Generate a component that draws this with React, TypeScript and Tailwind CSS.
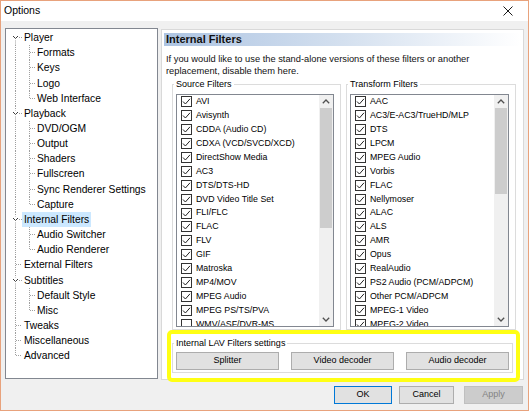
import React from "react";

type TreeNode = {
  label: string;
  level: 0 | 1;
  expanded?: boolean;
  first?: boolean;
  last?: boolean;
  selected?: boolean;
};

const tree: TreeNode[] = [
  { label: "Player", level: 0, expanded: true, first: true },
  { label: "Formats", level: 1 },
  { label: "Keys", level: 1 },
  { label: "Logo", level: 1 },
  { label: "Web Interface", level: 1, last: true },
  { label: "Playback", level: 0, expanded: true },
  { label: "DVD/OGM", level: 1 },
  { label: "Output", level: 1 },
  { label: "Shaders", level: 1 },
  { label: "Fullscreen", level: 1 },
  { label: "Sync Renderer Settings", level: 1 },
  { label: "Capture", level: 1, last: true },
  { label: "Internal Filters", level: 0, expanded: true, selected: true },
  { label: "Audio Switcher", level: 1 },
  { label: "Audio Renderer", level: 1, last: true },
  { label: "External Filters", level: 0 },
  { label: "Subtitles", level: 0, expanded: true },
  { label: "Default Style", level: 1 },
  { label: "Misc", level: 1, last: true },
  { label: "Tweaks", level: 0 },
  { label: "Miscellaneous", level: 0 },
  { label: "Advanced", level: 0, last: true },
];

const sourceFilters: [string, boolean][] = [
  ["AVI", true],
  ["Avisynth", true],
  ["CDDA (Audio CD)", true],
  ["CDXA (VCD/SVCD/XCD)", true],
  ["DirectShow Media", true],
  ["AC3", true],
  ["DTS/DTS-HD", true],
  ["DVD Video Title Set", true],
  ["FLI/FLC", true],
  ["FLAC", true],
  ["FLV", true],
  ["GIF", true],
  ["Matroska", true],
  ["MP4/MOV", true],
  ["MPEG Audio", true],
  ["MPEG PS/TS/PVA", true],
  ["WMV/ASF/DVR-MS", false],
  ["Ogg", true],
  ["RealMedia", true],
];

const transformFilters: [string, boolean][] = [
  ["AAC", true],
  ["AC3/E-AC3/TrueHD/MLP", true],
  ["DTS", true],
  ["LPCM", true],
  ["MPEG Audio", true],
  ["Vorbis", true],
  ["FLAC", true],
  ["Nellymoser", true],
  ["ALAC", true],
  ["ALS", true],
  ["AMR", true],
  ["Opus", true],
  ["RealAudio", true],
  ["PS2 Audio (PCM/ADPCM)", true],
  ["Other PCM/ADPCM", true],
  ["MPEG-1 Video", true],
  ["MPEG-2 Video", true],
  ["MPEG-4 Video", true],
];

const dotted = { stroke: "#a0a0a0", strokeWidth: 1, strokeDasharray: "1 1" };

function Gutter({ node }: { node: TreeNode }) {
  const h = 15;
  const c = 7.5;
  const w = node.level === 0 ? 16 : 29;
  return (
    <svg width={w} height={h} viewBox={`0 0 ${w} ${h}`} className="shrink-0">
      {node.level === 0 && node.expanded && (
        <>
          {!node.first && <line x1={9.5} y1={0} x2={9.5} y2={c - 3} {...dotted} />}
          {!node.last && <line x1={9.5} y1={c + 3} x2={9.5} y2={h} {...dotted} />}
          <polyline
            points={`7,${c - 1.5} 9.5,${c + 1} 12,${c - 1.5}`}
            fill="none"
            stroke="#3c3c3c"
            strokeWidth={1}
          />
          <line x1={13} y1={c} x2={16} y2={c} {...dotted} />
        </>
      )}
      {node.level === 0 && !node.expanded && (
        <>
          <line x1={9.5} y1={0} x2={9.5} y2={node.last ? c : h} {...dotted} />
          <line x1={10} y1={c} x2={16} y2={c} {...dotted} />
        </>
      )}
      {node.level === 1 && (
        <>
          <line x1={9.5} y1={0} x2={9.5} y2={h} {...dotted} />
          <line x1={23.5} y1={0} x2={23.5} y2={node.last ? c : h} {...dotted} />
          <line x1={24} y1={c} x2={29} y2={c} {...dotted} />
        </>
      )}
    </svg>
  );
}

function Tree() {
  return (
    <div className="w-[153px] h-[351px] border border-[#828790] bg-white pt-[1px] text-[10.3px] text-black">
      {tree.map((n) => (
        <div key={n.label} className="flex h-[15.16px] items-center">
          <Gutter node={n} />
          <span
            className={
              n.selected
                ? "h-[15px] px-[2px] leading-[15px] whitespace-nowrap bg-[#cce8ff]"
                : "h-[15px] px-[2px] leading-[15px] whitespace-nowrap"
            }
          >
            {n.label}
          </span>
        </div>
      ))}
    </div>
  );
}

function Check({ on }: { on: boolean }) {
  return (
    <span className="flex h-[11px] w-[11px] shrink-0 items-center justify-center border border-[#333333] bg-white">
      {on && (
        <svg width="9" height="9" viewBox="0 0 9 9">
          <polyline points="1,4.5 3.4,7 8,1.8" fill="none" stroke="#222222" strokeWidth={1} />
        </svg>
      )}
    </span>
  );
}

function Arrow({ up }: { up?: boolean }) {
  return (
    <svg width="8" height="5" viewBox="0 0 8 5">
      <polyline
        points={up ? "0.8,4.2 4,1 7.2,4.2" : "0.8,0.8 4,4 7.2,0.8"}
        fill="none"
        stroke="#505050"
        strokeWidth={1.3}
      />
    </svg>
  );
}

function FilterList({ items, thumb }: { items: [string, boolean][]; thumb: number }) {
  return (
    <div className="flex h-[233px] w-full border border-[#828790] bg-white">
      <div className="flex-1 overflow-hidden">
        {items.map(([label, on]) => (
          <div key={label} className="flex h-[13.9px] items-center gap-[4px] pl-[4px] text-[8.8px] whitespace-nowrap">
            <Check on={on} />
            <span>{label}</span>
          </div>
        ))}
      </div>
      <div className="flex w-[14px] flex-col bg-[#f0f0f0]">
        <div className="flex h-[13px] items-center justify-center">
          <Arrow up />
        </div>
        <div className="flex-1 px-[1px]">
          <div className="w-full bg-[#cdcdcd]" style={{ height: thumb }} />
        </div>
        <div className="flex h-[14px] items-center justify-center">
          <Arrow />
        </div>
      </div>
    </div>
  );
}

function Group({
  title,
  className,
  children,
}: {
  title: string;
  className: string;
  children: React.ReactNode;
}) {
  return (
    <fieldset className={`border border-[#dcdcdc] ${className}`}>
      <legend className="-ml-[2px] px-[2px] text-[9px] leading-[12px] text-black">{title}</legend>
      {children}
    </fieldset>
  );
}

function Btn({ label, w }: { label: string; w: string }) {
  return (
    <div
      className={`flex h-[18px] items-center justify-center border border-[#adadad] bg-[#e1e1e1] text-[9px] text-black ${w}`}
    >
      {label}
    </div>
  );
}

export default function App() {
  return (
    <div className="flex h-[411px] w-[529px] flex-col border border-[#e8a27c] bg-[#f0f0f0] font-['Liberation_Sans',Arial,sans-serif] text-black">
      <div className="flex h-[20px] shrink-0 items-center justify-between bg-white pl-[3px] pr-[15px]">
        <span className="text-[10.5px]">Options</span>
        <svg width="10" height="10" viewBox="0 0 10 10">
          <path d="M0.5 0.5 L9.5 9.5 M9.5 0.5 L0.5 9.5" stroke="#1a1a1a" strokeWidth={1} />
        </svg>
      </div>

      <div className="flex flex-1 flex-col px-[4px] pt-[7px]">
        <div className="flex items-start gap-[3px]">
          <Tree />

          <div className="mt-[1px] flex h-[351px] w-[363px] flex-col border border-[#d9d9d9] bg-white px-[2px] pt-[3px]">
            <div className="h-[13px] bg-gradient-to-r from-[#adc4e2] via-[#d4e0ef] to-white px-[2px] text-[11px] font-bold leading-[13px] text-[#111111]">
              Internal Filters
            </div>
            <div className="mt-[7px] pl-[2px] text-[9.3px] leading-[12px] text-[#111111]">
              If you would like to use the stand-alone versions of these filters or another
              <br />
              replacement, disable them here.
            </div>
            <div className="mt-[1px] ml-[8px] flex gap-[5px]">
              <Group title="Source Filters" className="w-[169px] pr-[6px] pl-[3px] pt-[4px] pb-[2px]">
                <FilterList items={sourceFilters} thumb={120} />
              </Group>
              <Group title="Transform Filters" className="w-[170px] pr-[6px] pl-[3px] pt-[4px] pb-[2px]">
                <FilterList items={transformFilters} thumb={86} />
              </Group>
            </div>
            <div className="ml-[3px] h-[52px] w-[353px] shrink-0 rounded-[5px] border-4 border-[#ffff14] pt-[3px]">
              <Group title="Internal LAV Filters settings" className="ml-[1px] w-[341px] pl-[3px] pb-[2px]">
                <div className="mt-[3px] flex gap-[12px]">
                  <Btn label="Splitter" w="w-[103px]" />
                  <Btn label="Video decoder" w="w-[103px]" />
                  <Btn label="Audio decoder" w="w-[103px]" />
                </div>
              </Group>
            </div>
          </div>
        </div>

        <div className="mt-[6px] flex justify-end pr-[1px]">
          <div className="flex h-[18px] w-[58px] items-center justify-center border border-[#0078d7] bg-[#e1e1e1] text-[9px]">
            OK
          </div>
          <div className="ml-[7px] flex h-[18px] w-[55px] items-center justify-center border border-[#adadad] bg-[#e1e1e1] text-[9px]">
            Cancel
          </div>
          <div className="ml-[10px] flex h-[18px] w-[59px] items-center justify-center border border-[#bfbfbf] bg-[#cccccc] text-[9px] text-[#838383]">
            Apply
          </div>
        </div>
      </div>
    </div>
  );
}
